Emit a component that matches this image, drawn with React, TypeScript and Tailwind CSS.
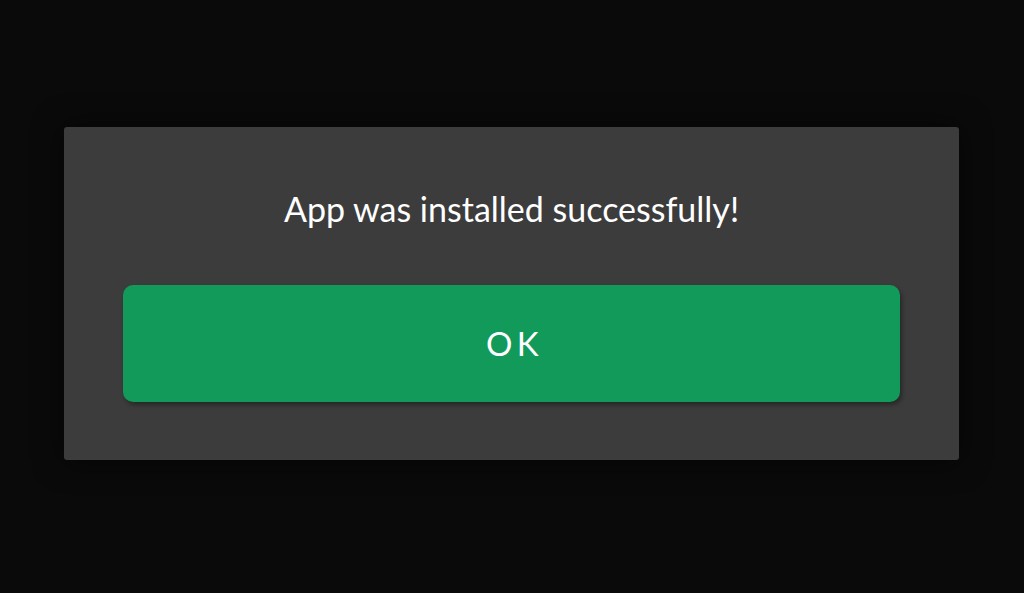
const App = () => {
  return (
    <div className="min-h-screen w-full bg-[#0a0a0a] pt-[127px] px-[64px]" style={{ fontFamily: 'Lato, "Open Sans", sans-serif' }}>
      <div className="w-[895px] h-[333px] rounded-[3px] bg-[#3c3c3c] px-[59px] pt-[60px] flex flex-col shadow-[0_0_30px_rgba(0,0,0,0.6)]">
        <p className="text-center text-[34px] leading-[44px] text-white">App was installed successfully!</p>
        <button className="mt-[54px] h-[117px] w-full rounded-[10px] bg-[#129a5b] pl-[6px] text-white text-[33px] tracking-[0.13em] shadow-[2px_3px_4px_rgba(0,0,0,0.35)]">
          OK
        </button>
      </div>
    </div>
  );
};

export default App;
